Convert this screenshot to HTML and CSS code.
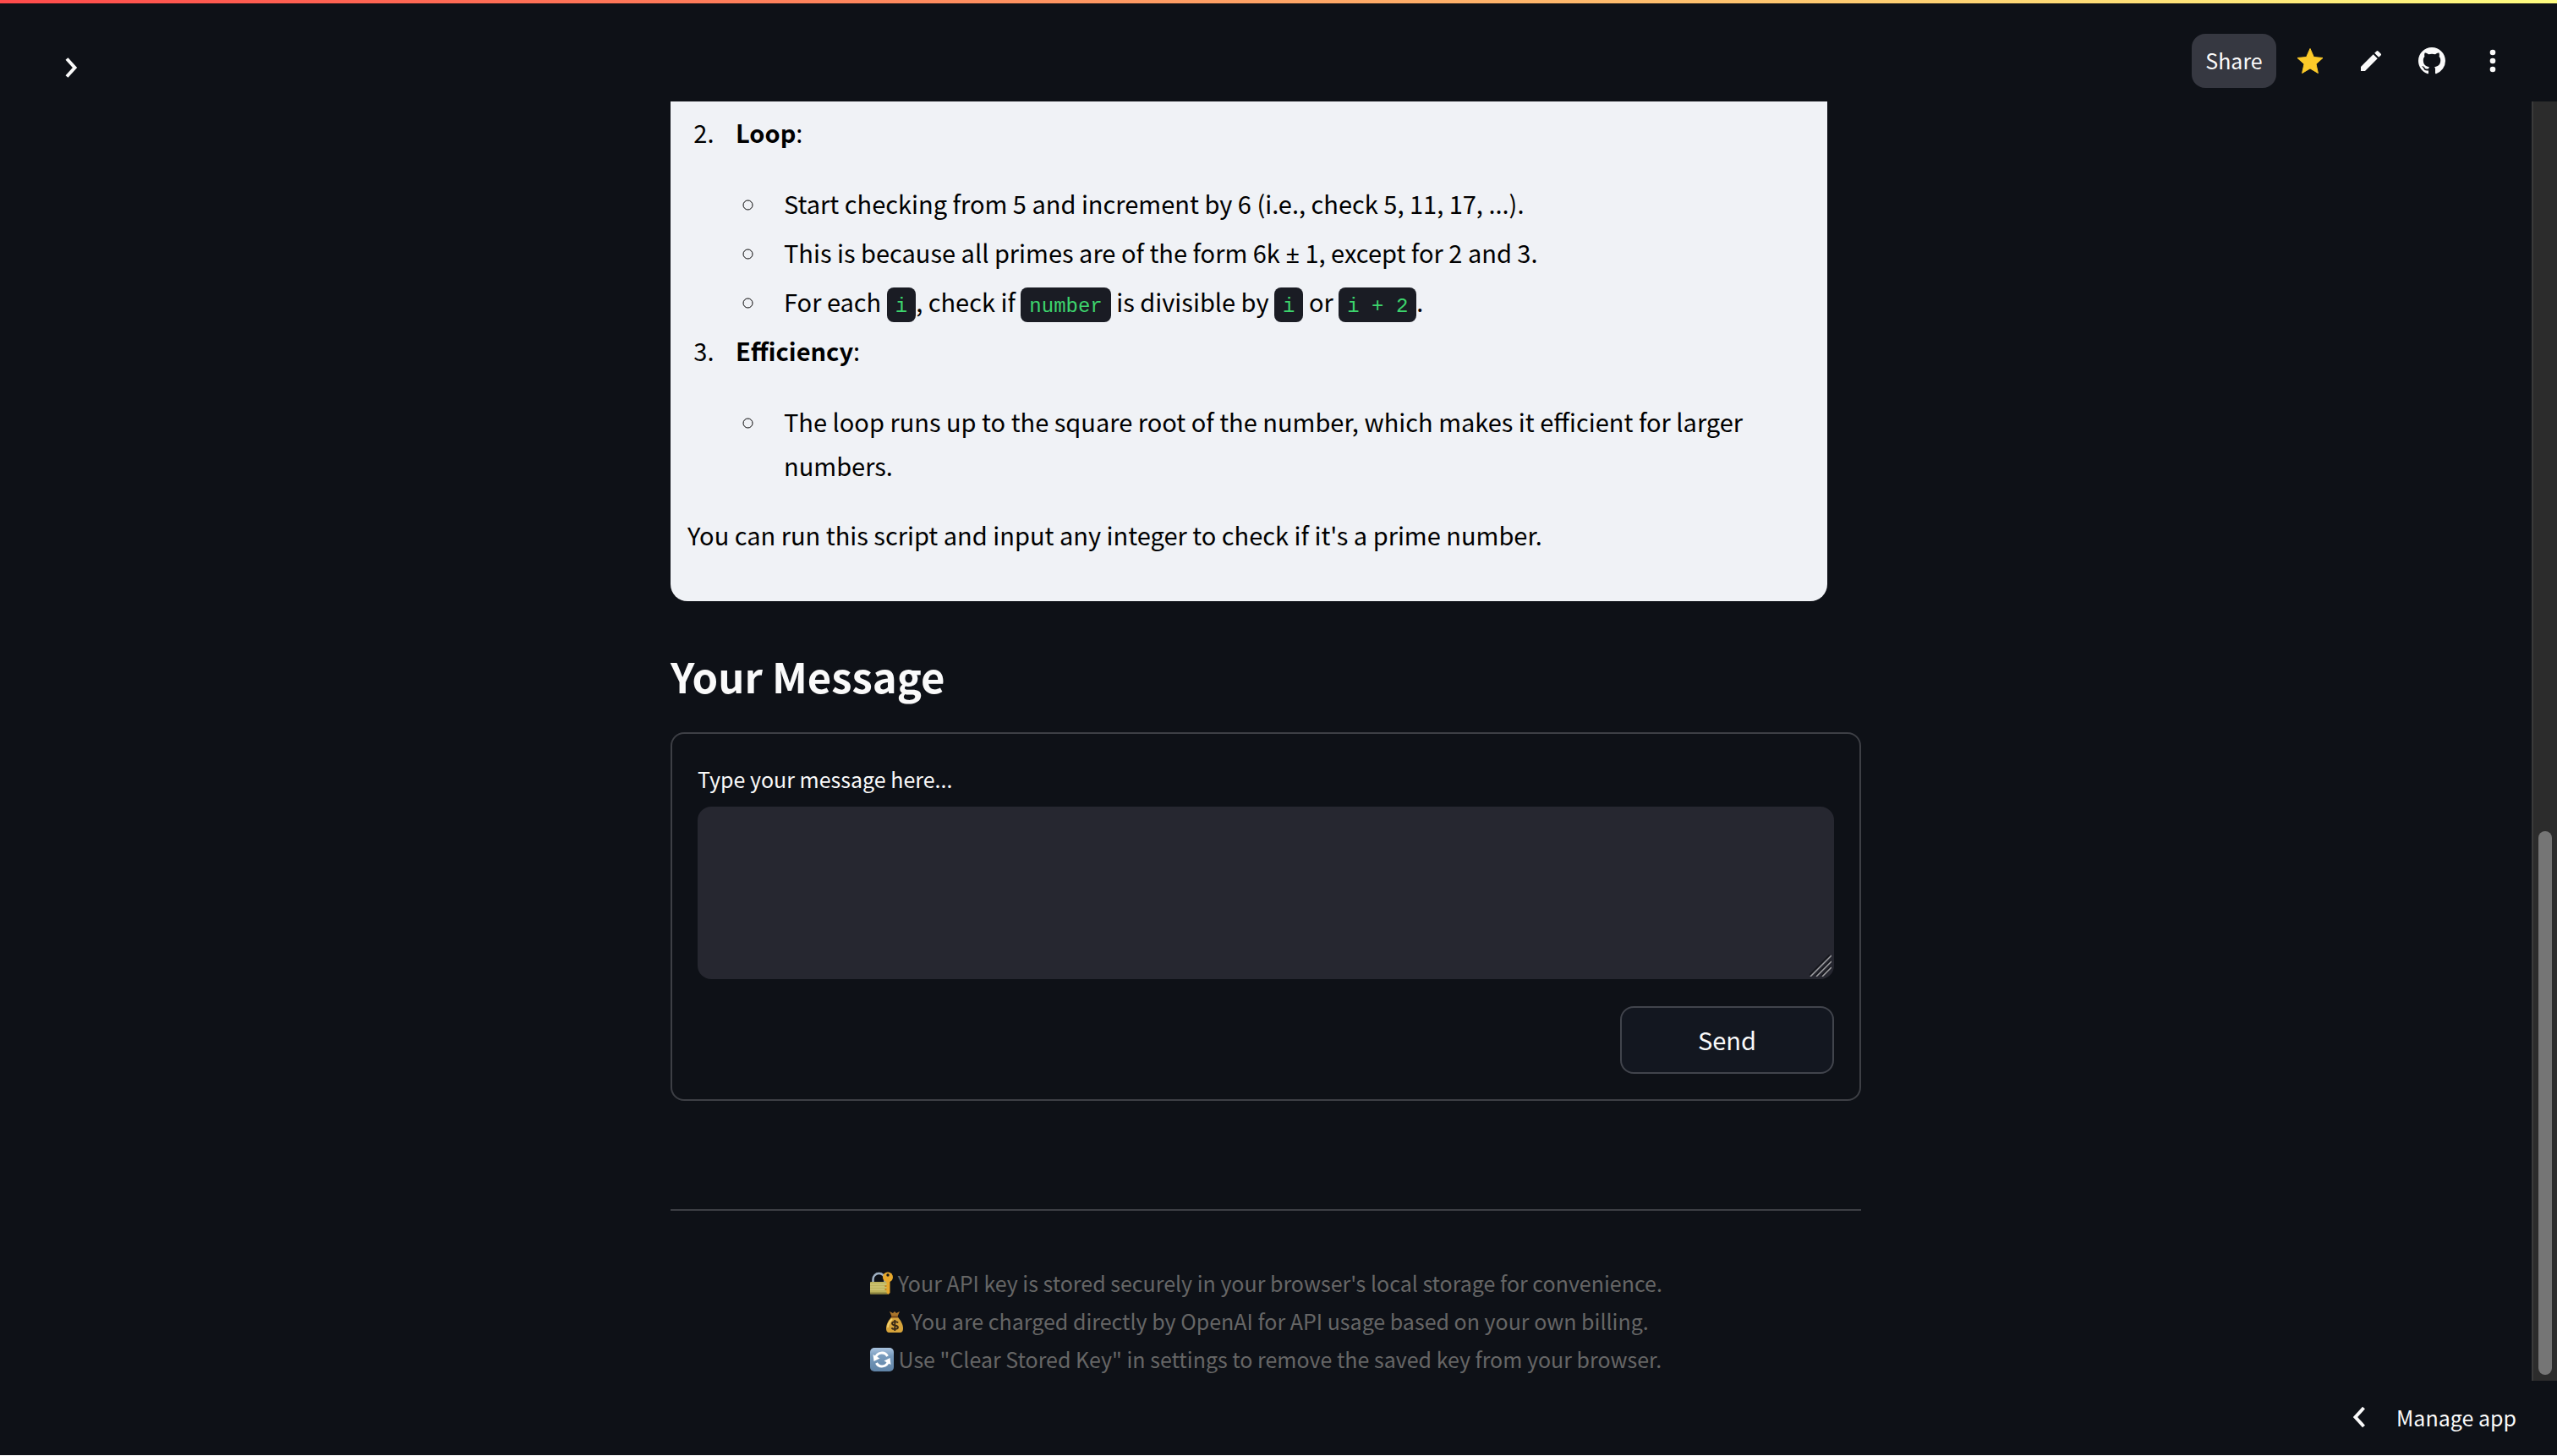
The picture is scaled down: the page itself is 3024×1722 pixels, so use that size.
FILE: index.html
```html
<!DOCTYPE html>
<html lang="en">
<head>
<meta charset="utf-8">
<title>Chat</title>
<link rel="stylesheet" href="styles.css">
</head>
<body>
<div class="decoration"></div>
<header class="topbar">
  <button class="icon-button" type="button" aria-label="Open sidebar">
    <svg class="icon" viewBox="0 0 32 32"><path d="M11 5.500l9.500 10.500L11 26.500" fill="none" stroke="currentColor" stroke-width="4" stroke-linecap="butt"/></svg>
  </button>
  <nav class="toolbar">
    <button class="share" type="button">Share</button>
    <button class="icon-button" type="button" aria-label="Favorite">
      <svg class="icon" viewBox="0 0 32 32"><path d="M16 1.500l4.400 10 10.600 1-8 7.200 2.400 10.800-9.400-5.600-9.400 5.600L9 19.700l-8-7.200 10.600-1z" fill="#fcca29" stroke="#fcca29" stroke-width="1" stroke-linejoin="round"/></svg>
    </button>
    <button class="icon-button" type="button" aria-label="Edit">
      <svg class="icon" viewBox="0 0 24 24"><path d="M3 17.250V21h3.750L17.810 9.940l-3.750-3.750zM20.710 7.040a1 1 0 000-1.410l-2.340-2.340a1 1 0 00-1.410 0l-1.830 1.830 3.750 3.750z" fill="currentColor"/></svg>
    </button>
    <button class="icon-button" type="button" aria-label="View source on GitHub">
      <svg class="icon" viewBox="0 0 16 16"><path d="M8 0C3.580 0 0 3.580 0 8c0 3.540 2.290 6.530 5.470 7.590.4.070.550-.170.550-.380 0-.190-.010-.820-.010-1.490-2.010.370-2.530-.490-2.690-.940-.090-.230-.480-.940-.820-1.130-.280-.150-.680-.520-.010-.530.630-.010 1.080.580 1.230.820.720 1.210 1.870.870 2.330.660.070-.520.280-.870.510-1.070-1.780-.2-3.640-.890-3.640-3.950 0-.870.310-1.590.820-2.150-.080-.2-.360-1.020.080-2.120 0 0 .670-.210 2.200.820.640-.180 1.320-.270 2-.270s1.360.090 2 .270c1.530-1.040 2.200-.820 2.200-.820.440 1.100.160 1.920.080 2.120.510.560.820 1.270.820 2.150 0 3.070-1.870 3.750-3.650 3.950.290.250.540.730.540 1.480 0 1.070-.010 1.930-.010 2.200 0 .210.150.460.550.380A8.010 8.010 0 0016 8c0-4.420-3.580-8-8-8z" fill="currentColor"/></svg>
    </button>
    <button class="icon-button" type="button" aria-label="More options">
      <svg class="icon" viewBox="0 0 32 32"><g fill="currentColor"><circle cx="16" cy="6" r="3.300"/><circle cx="16" cy="16" r="3.300"/><circle cx="16" cy="26" r="3.300"/></g></svg>
    </button>
  </nav>
</header>

<div class="viewport">
  <main class="column">
    <article class="reply">
      <ol class="steps" start="2">
        <li><p><strong>Loop</strong>:</p>
          <ul>
            <li>Start checking from 5 and increment by 6 (i.e., check 5, 11, 17, ...).</li>
            <li>This is because all primes are of the form 6k <span class="math">±</span> 1, except for 2 and 3.</li>
            <li>For each <code>i</code>, check if <code>number</code> is divisible by <code>i</code> or <code>i + 2</code>.</li>
          </ul>
        </li>
        <li><p><strong>Efficiency</strong>:</p>
          <ul>
            <li>The loop runs up to the square root of the number, which makes it efficient for larger numbers.</li>
          </ul>
        </li>
      </ol>
      <p class="closing">You can run this script and input any integer to check if it's a prime number.</p>
    </article>

    <h3 class="heading">Your Message</h3>
    <form class="composer">
      <label for="message">Type your message here...</label>
      <div class="field">
        <textarea id="message"></textarea>
        <svg class="grip" viewBox="0 0 26 26"><g fill="none" stroke-width="1.500"><path d="M0 24L24 0M7 25L25 7M14 25L25 14" stroke="#15161b"/><path d="M1 26L26 1M8 26L26 8M15 26L26 15" stroke="#a0a0a3"/></g></svg>
      </div>
      <button class="send" type="button">Send</button>
    </form>

    <footer class="notes">
      <p><svg class="emoji" viewBox="0 0 28 28"><path d="M4.500 13V9a7 7 0 0114 0v4" fill="none" stroke="#9fb0c2" stroke-width="2.500"/><rect x="1" y="12" width="21" height="14.500" rx="1" fill="#bdb35c"/><path d="M1 15h21M1 18h21M1 21h21" stroke="#d8cf83"/><path d="M1 25.500h21" stroke="#88803d" stroke-width="2"/><circle cx="22" cy="6.500" r="6" fill="#e8a92c"/><circle cx="22" cy="4" r="1.700" fill="#1b1a17"/><path d="M20.500 11h4v14l-2 2-2-2z" fill="#e8a92c"/><path d="M20.500 16h-2v2h2m0 2h-2v2h2" fill="#ca851c"/></svg> Your API key is stored securely in your browser's local storage for convenience.</p>
      <p><svg class="emoji" viewBox="0 0 28 28"><path d="M8 2l4 2 2-2 2 2 4-2-3 7h-6z" fill="#a9742a"/><path d="M11 8h6c4 4 7 9 7 14 0 3-1 5-4 5H8c-3 0-4-2-4-5 0-5 3-10 7-14z" fill="#d7a43b"/><path d="M11 11c-3 3-5 7-5 10" fill="none" stroke="#f3d26f" stroke-width="2"/><path d="M10 8.500h8" stroke="#76491c" stroke-width="2"/><path d="M18 15.500c-1-2-7-2-7 .8 0 3 7 1.500 7 4.500 0 2.800-6.500 2.800-7.500.5M14.300 12v13" fill="none" stroke="#3a2a16" stroke-width="1.900"/></svg> You are charged directly by OpenAI for API usage based on your own billing.</p>
      <p><svg class="emoji" viewBox="0 0 28 28"><defs><linearGradient id="tile" x2="0" y2="1"><stop stop-color="#a9c3df"/><stop offset=".35" stop-color="#789bbd"/><stop offset="1" stop-color="#5f83a6"/></linearGradient></defs><rect width="28" height="28" rx="5" fill="url(#tile)"/><path d="M6.500 12c1.500-7 11-8 14-2M21.500 16c-1.500 7-11 8-14 2" fill="none" stroke="#fff" stroke-width="3"/><path d="M3.500 8l1 8 7-3.500zM24.500 20l-1-8-7 3.500z" fill="#fff"/></svg> Use "Clear Stored Key" in settings to remove the saved key from your browser.</p>
    </footer>
  </main>
  <div class="rail"><div class="thumb"></div></div>
</div>

<div class="statusbar">
  <button class="manage" type="button">
    <svg class="icon" viewBox="0 0 32 32"><path d="M21.500 5L11.500 16l10 11" fill="none" stroke="currentColor" stroke-width="4"/></svg>
    Manage app
  </button>
</div>
</body>
</html>
```
FILE: styles.css
```css
* {
  box-sizing: border-box;
}

body {
  display: flex;
  flex-direction: column;
  min-height: 100vh;
  margin: 0;
  border-bottom: 1px solid #fff;
  background: #0e1117;
  color: #fafafa;
  font-family: "Noto Sans CJK SC", "Open Sans", sans-serif;
  font-size: 29px;
  line-height: 52px;
}

button {
  padding: 0;
  border: 0;
  background: none;
  color: inherit;
  font: inherit;
}

p,
ul,
ol {
  margin: 0;
  padding: 0;
}

.decoration {
  height: 4px;
  background: linear-gradient(90deg, #ff4b4b, #fffd80);
}

.topbar {
  display: flex;
  align-items: center;
  justify-content: space-between;
  height: 116px;
  padding: 20px 60px 0 68px;
}

.topbar > .icon-button {
  margin-top: 16px;
}

.toolbar {
  display: flex;
  align-items: center;
  gap: 40px;
}

.share {
  width: 100px;
  height: 64px;
  margin-right: -16px;
  padding-bottom: 2px;
  border-radius: 16px;
  background: #363841;
  font-size: 25px;
}

.icon-button {
  display: flex;
}

.icon {
  width: 32px;
  height: 32px;
}

.viewport {
  display: flex;
  flex: 1;
}

.column {
  width: 1408px;
  margin: 0 auto;
}

.reply {
  margin-right: 40px;
  padding: 10px 20px 53px;
  border-radius: 0 0 20px 20px;
  background: #f0f2f6;
  color: #000;
}

.steps,
.steps ul {
  padding-left: 38px;
}

.steps li {
  padding-left: 19px;
}

.steps li + li {
  margin-top: 6px;
}

.steps p {
  margin-bottom: 32px;
}

.steps ul {
  list-style: circle;
}

.math {
  font-family: "Noto Sans", sans-serif;
  line-height: 1;
}

code {
  padding: 9px 10px 5px;
  border-radius: 8px;
  background: #1a1c24;
  color: #3dd56d;
  font-family: "Liberation Mono", monospace;
  font-size: 24px;
  line-height: 1;
}

.closing {
  margin-top: 30px;
}

.heading {
  margin: 53px 0 32px;
  font-size: 49px;
  line-height: 70px;
}

.composer {
  display: flex;
  flex-direction: column;
  padding: 30px;
  border: 2px solid #3d3f45;
  border-radius: 16px;
}

.composer label {
  padding-bottom: 10px;
  font-size: 25px;
  line-height: 46px;
}

.field {
  position: relative;
  display: flex;
}

.field textarea {
  flex: 1;
  height: 204px;
  padding: 24px;
  border: 0;
  border-radius: 16px;
  background: #262730;
  color: inherit;
  font: inherit;
  resize: none;
}

.grip {
  position: absolute;
  right: 3px;
  bottom: 3px;
  width: 26px;
  height: 26px;
}

.send {
  align-self: flex-end;
  width: 253px;
  height: 80px;
  margin-top: 32px;
  padding-bottom: 2px;
  border: 2px solid #41444c;
  border-radius: 16px;
  background: #131720;
}

.notes {
  margin-top: 128px;
  padding-top: 63px;
  border-top: 2px solid #3d3f45;
  color: #666;
  font-size: 25px;
  line-height: 45px;
  text-align: center;
}

.emoji {
  width: 28px;
  height: 28px;
  vertical-align: -4px;
}

.rail {
  display: grid;
  grid-template-rows: 863fr 643fr;
  width: 30px;
  padding: 0 6px 7px;
  border-left: 2px solid #3a3a3a;
  background: #2c2c2c;
}

.thumb {
  grid-row: 2;
  border-radius: 8px;
  background: #757575;
}

.statusbar {
  display: flex;
  justify-content: flex-end;
  height: 88px;
  padding-right: 48px;
}

.manage {
  display: flex;
  align-items: center;
  gap: 28px;
  padding-bottom: 2px;
  font-size: 25px;
}
```
